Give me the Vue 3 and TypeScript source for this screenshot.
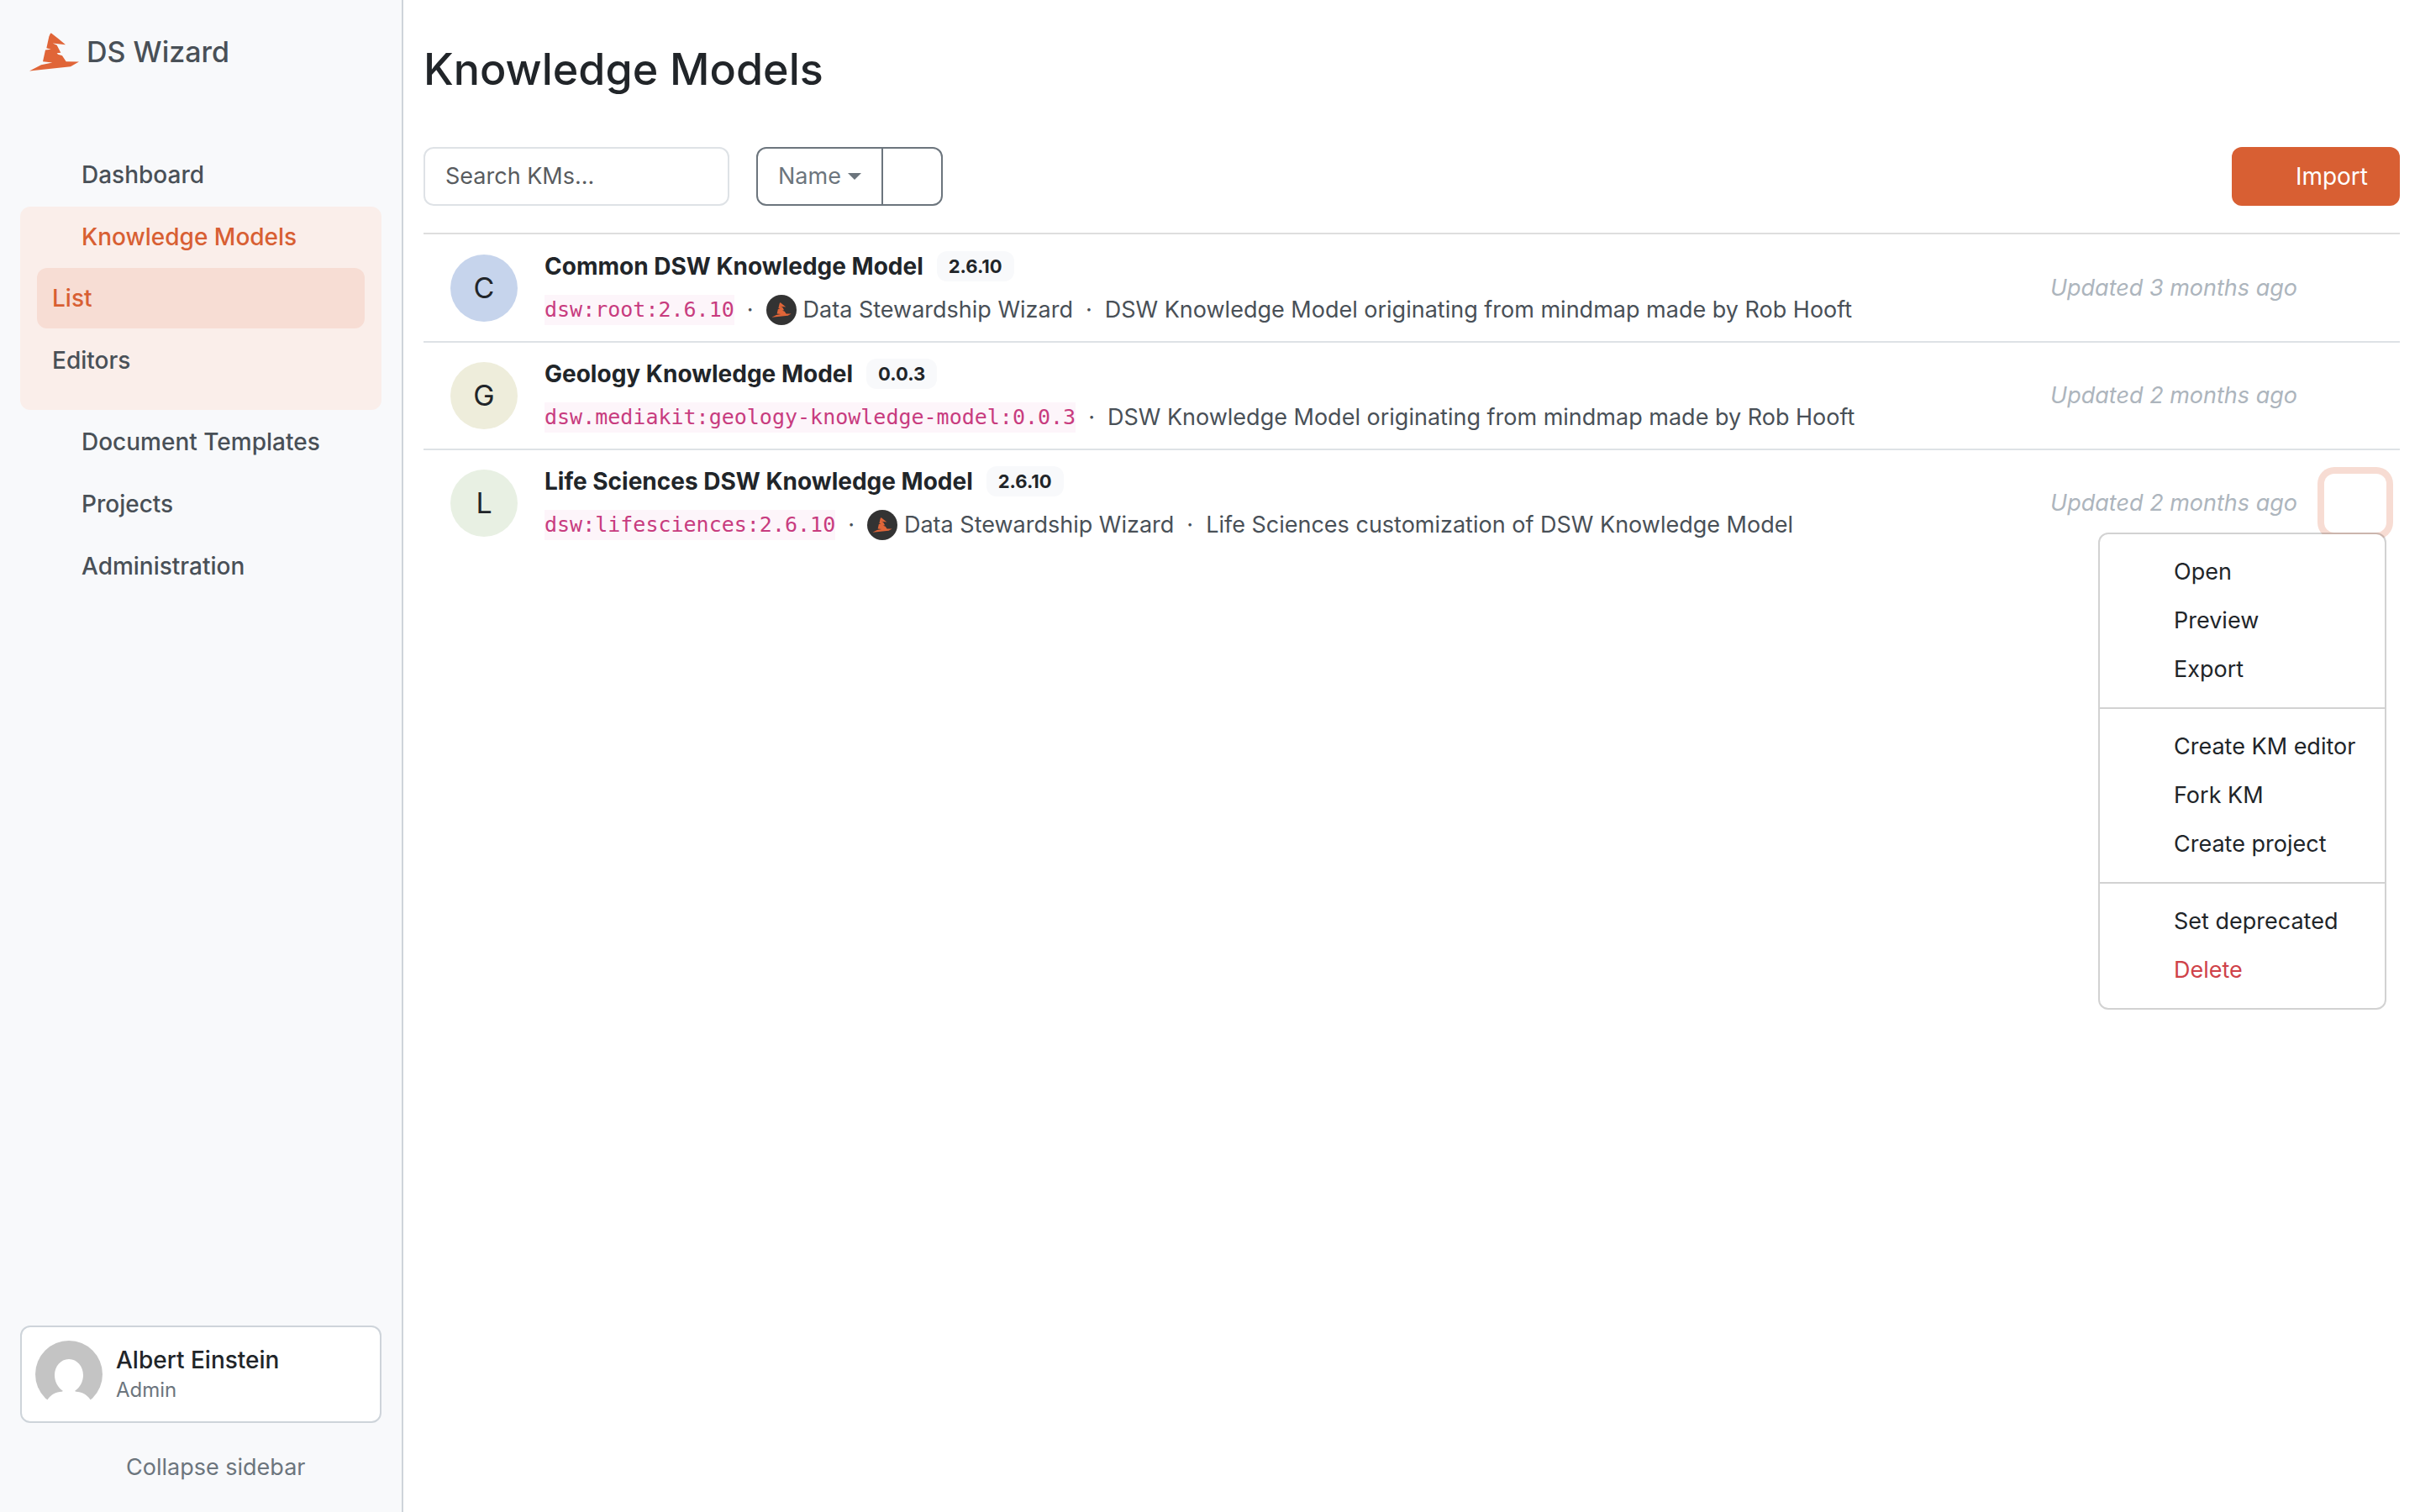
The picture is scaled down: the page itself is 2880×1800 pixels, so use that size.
<script setup lang="ts">
import { ref } from 'vue'

interface KnowledgeModel {
  letter: string
  color: string
  name: string
  version: string
  id: string
  organization?: string
  description: string
  updated: string
}

interface MenuItem {
  label: string
  danger?: boolean
}

const models: KnowledgeModel[] = [
  {
    letter: 'C',
    color: '#c6d4ec',
    name: 'Common DSW Knowledge Model',
    version: '2.6.10',
    id: 'dsw:root:2.6.10',
    organization: 'Data Stewardship Wizard',
    description: 'DSW Knowledge Model originating from mindmap made by Rob Hooft',
    updated: 'Updated 3 months ago',
  },
  {
    letter: 'G',
    color: '#eeeddb',
    name: 'Geology Knowledge Model',
    version: '0.0.3',
    id: 'dsw.mediakit:geology-knowledge-model:0.0.3',
    description: 'DSW Knowledge Model originating from mindmap made by Rob Hooft',
    updated: 'Updated 2 months ago',
  },
  {
    letter: 'L',
    color: '#e8f0e3',
    name: 'Life Sciences DSW Knowledge Model',
    version: '2.6.10',
    id: 'dsw:lifesciences:2.6.10',
    organization: 'Data Stewardship Wizard',
    description: 'Life Sciences customization of DSW Knowledge Model',
    updated: 'Updated 2 months ago',
  },
]

const menuGroups: MenuItem[][] = [
  [{ label: 'Open' }, { label: 'Preview' }, { label: 'Export' }],
  [{ label: 'Create KM editor' }, { label: 'Fork KM' }, { label: 'Create project' }],
  [{ label: 'Set deprecated' }, { label: 'Delete', danger: true }],
]

const hat =
  'M180 119 Q183 117 187 121 L210 139 L234 159 L188 154 L203 161 L217 188 L203 189 L207 194 L222 198 L236 219 L282 220 L252 237 L105 253 L147 231 L187 223 L153 219 L162 178 L182 176 L166 171 L175 130 Z'

const search = ref('')
const openRow = ref<number>(2)

function toggle(index: number) {
  openRow.value = openRow.value === index ? -1 : index
}
</script>

<template>
  <div class="app">
    <aside class="sidebar">
      <a class="brand" href="#">
        <svg class="brand-logo" viewBox="105 117 177 137" aria-hidden="true"><path :d="hat" fill="#e06538" /></svg>
        <span>DS Wizard</span>
      </a>

      <nav class="nav" aria-label="Main">
        <a class="nav-item" href="#">Dashboard</a>
        <div class="nav-group">
          <a class="nav-item active" href="#">Knowledge Models</a>
          <div class="subnav">
            <a class="subnav-item active" href="#">List</a>
            <a class="subnav-item" href="#">Editors</a>
          </div>
        </div>
        <a class="nav-item" href="#">Document Templates</a>
        <a class="nav-item" href="#">Projects</a>
        <a class="nav-item" href="#">Administration</a>
      </nav>

      <button class="user" type="button">
        <svg class="user-avatar" viewBox="0 0 80 80" aria-hidden="true">
          <circle cx="40" cy="40" r="40" fill="#c4c4c4" />
          <path
            d="M40 22 C30 22 23 31 23 41 C23 49 27 56 33 60 Q32 61 29 61 C22 62 17 66 14 71 V80 H66 V71 C63 66 58 62 51 61 Q48 61 47 60 C53 56 57 49 57 41 C57 31 50 22 40 22 Z"
            fill="#fff"
          />
        </svg>
        <span class="user-text">
          <span class="user-name">Albert Einstein</span>
          <span class="user-role">Admin</span>
        </span>
      </button>
      <button class="collapse" type="button">Collapse sidebar</button>
    </aside>

    <main class="main">
      <h1 class="title">Knowledge Models</h1>

      <div class="toolbar">
        <input v-model="search" class="search" type="text" placeholder="Search KMs..." aria-label="Search KMs" />
        <div class="sort">
          <button class="sort-by" type="button">Name<span class="caret"></span></button>
          <button class="sort-dir" type="button" aria-label="Sort direction"></button>
        </div>
        <button class="import" type="button">Import</button>
      </div>

      <ul class="list">
        <li v-for="(model, index) in models" :key="model.id" class="row">
          <span class="letter" :style="{ backgroundColor: model.color }">{{ model.letter }}</span>
          <div class="info">
            <div class="line">
              <a class="name" href="#">{{ model.name }}</a>
              <span class="badge">{{ model.version }}</span>
            </div>
            <div class="line details">
              <code class="id">{{ model.id }}</code>
              <span class="dot">·</span>
              <template v-if="model.organization">
                <svg class="org-logo" viewBox="0 0 36 36" aria-hidden="true">
                  <circle cx="18" cy="18" r="18" fill="#333" />
                  <svg x="6" y="9" width="24" height="18" viewBox="105 117 177 137"><path :d="hat" fill="#e06538" /></svg>
                </svg>
                <span class="org">{{ model.organization }}</span>
                <span class="dot">·</span>
              </template>
              <span>{{ model.description }}</span>
            </div>
          </div>
          <span class="updated">{{ model.updated }}</span>
          <div class="actions">
            <button
              class="actions-toggle"
              :class="{ open: openRow === index }"
              type="button"
              :aria-label="'Actions for ' + model.name"
              :aria-expanded="openRow === index"
              @click="toggle(index)"
            ></button>
            <div v-if="openRow === index" class="menu">
              <div v-for="(group, g) in menuGroups" :key="g" class="menu-group">
                <a v-for="item in group" :key="item.label" class="menu-item" :class="{ danger: item.danger }" href="#">{{ item.label }}</a>
              </div>
            </div>
          </div>
        </li>
      </ul>
    </main>
  </div>
</template>

<style>
body {
  margin: 0;
  background: #fff;
}
</style>

<style scoped>
.app {
  display: flex;
  min-height: 100vh;
  font-family: Inter, "Liberation Sans", sans-serif;
  font-size: 27px;
  line-height: 42px;
  color: #212529;
}

.app *,
.app {
  box-sizing: border-box;
}

a {
  color: inherit;
  text-decoration: none;
}

button,
input {
  margin: 0;
  font: inherit;
  color: inherit;
  background: none;
}

/* Sidebar */
.sidebar {
  display: flex;
  flex-direction: column;
  flex: none;
  width: 480px;
  padding: 24px 24px 12px;
  border-right: 2px solid #ced4da;
  background: #f8f9fb;
}

.brand {
  display: flex;
  align-items: center;
  gap: 9px;
  height: 76px;
  padding: 0 11px;
  font-size: 34px;
  font-weight: 500;
  color: #495057;
}

.brand-logo {
  width: 59px;
  height: 46px;
}

.nav {
  display: flex;
  flex-direction: column;
  flex: 1;
  gap: 2px;
  padding-top: 72px;
  font-size: 28px;
  font-weight: 500;
  color: #495057;
}

.nav-item,
.subnav-item {
  padding: 15px 18px;
  border-radius: 12px;
}

.nav-item {
  padding-left: 73px;
}

.nav-item.active,
.subnav-item.active {
  color: #d85f33;
}

.nav-group {
  display: flex;
  flex-direction: column;
  border-radius: 12px;
  background: #faeeea;
}

.subnav {
  display: flex;
  flex-direction: column;
  gap: 2px;
  padding: 1px 20px 23px;
}

.subnav-item.active {
  background: #f7ddd4;
}

.user {
  display: flex;
  align-items: center;
  gap: 16px;
  height: 116px;
  padding: 0 16px;
  border: 2px solid #ced4da;
  border-radius: 12px;
  background: #fff;
  text-align: left;
}

.user-avatar {
  width: 80px;
  height: 80px;
}

.user-text {
  display: flex;
  flex-direction: column;
}

.user-name {
  font-size: 28px;
  line-height: 38px;
  font-weight: 500;
}

.user-role {
  line-height: 34px;
  font-size: 24px;
  color: #6c757d;
}

.collapse {
  height: 82px;
  margin-top: 12px;
  padding: 0 0 0 126px;
  border: 0;
  color: #6c757d;
  text-align: left;
}

/* Main */
.main {
  flex: 1;
  min-width: 0;
  padding: 49px 24px;
}

.title {
  margin: 0 0 58px;
  font-size: 52px;
  line-height: 68px;
  font-weight: 500;
}

.toolbar {
  display: flex;
  height: 70px;
  margin-bottom: 32px;
}

.search {
  width: 364px;
  margin-right: 32px;
  padding: 0 24px;
  border: 2px solid #dee2e6;
  border-radius: 12px;
  outline: 0;
}

.search::placeholder {
  color: #595c5f;
  opacity: 1;
}

.sort {
  display: flex;
  width: 222px;
  border: 2px solid #6c757d;
  border-radius: 12px;
  color: #6c757d;
}

.sort-by {
  display: flex;
  align-items: center;
  gap: 8px;
  width: 147px;
  padding: 0 0 0 24px;
  border: 0;
}

.caret {
  border: 8px solid transparent;
  border-top-color: currentColor;
  border-bottom: 0;
}

.sort-dir {
  flex: 1;
  border: 0;
  border-left: 2px solid #6c757d;
}

.import {
  width: 200px;
  margin-left: auto;
  padding: 0 38px;
  border: 0;
  border-radius: 12px;
  background: #d85f33;
  color: #fff;
  font-size: 28px;
  text-align: right;
}

.list {
  margin: 0;
  padding: 0;
  list-style: none;
}

.row {
  display: flex;
  align-items: center;
  height: 128px;
  padding: 0 16px 0 32px;
  border-top: 2px solid #dee2e6;
}

.row:first-child {
  height: 129px;
  border-top-color: #dedede;
}

.letter {
  display: flex;
  align-items: center;
  justify-content: center;
  flex: none;
  width: 80px;
  height: 80px;
  margin-right: 32px;
  border-radius: 50%;
  font-size: 34px;
}

.info {
  flex: 1;
  display: flex;
  flex-direction: column;
  gap: 10px;
}

.line {
  display: flex;
  align-items: center;
  white-space: nowrap;
}

.name {
  font-size: 28px;
  font-weight: 700;
}

.badge {
  margin-left: 16px;
  padding: 0 14px;
  border-radius: 12px;
  background: #f8f9fb;
  font-size: 22px;
  line-height: 36px;
  font-weight: 700;
}

.details {
  color: #495057;
}

.id {
  background: #fdf5fa;
  color: #c83c7f;
  font-family: "DejaVu Sans Mono", "Liberation Mono", monospace;
  font-size: 25px;
  line-height: 36px;
}

.dot {
  margin: 0 15px;
}

.org-logo {
  width: 36px;
  height: 36px;
  margin-right: 8px;
}

.updated {
  margin-right: 32px;
  color: #adb5bd;
  font-style: italic;
}

.actions {
  position: relative;
}

.actions-toggle {
  display: block;
  width: 74px;
  height: 70px;
  border: 0;
  border-radius: 12px;
}

.actions-toggle.open {
  box-shadow: 0 0 0 8px #f7dcd3;
}

.menu {
  position: absolute;
  z-index: 1;
  top: 100%;
  right: 0;
  min-width: 343px;
  border: 2px solid rgba(0, 0, 0, 0.175);
  border-radius: 12px;
  background: #fff;
  background-clip: padding-box;
  white-space: nowrap;
}

.menu-group {
  display: flex;
  flex-direction: column;
  padding: 16px 0;
}

.menu-group + .menu-group {
  border-top: 2px solid #d2d2d2;
}

.menu-item {
  padding: 8px 28px 8px 88px;
}

.menu-item.danger {
  color: #cf4249;
}
</style>
